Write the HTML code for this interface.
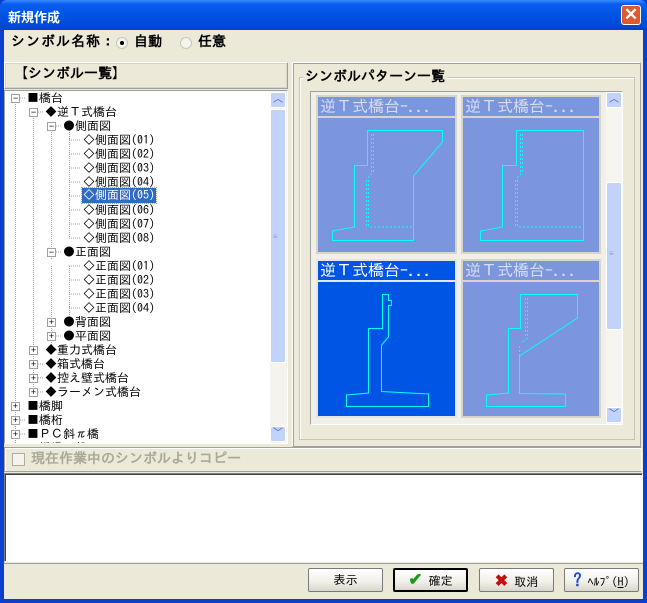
<!DOCTYPE html>
<html><head><meta charset="utf-8"><style>
*{margin:0;padding:0;box-sizing:border-box}
body{width:647px;height:603px;overflow:hidden;background:#0a3fd0;font-family:"Liberation Sans","Noto Sans CJK JP",sans-serif;font-size:12px;position:relative}
.a{position:absolute}
#title{left:0;top:0;width:647px;height:30px;background:linear-gradient(#3a8cff 0,#0a5cf0 4px,#0054e3 15px,#0048d8 26px,#0040c8 30px);border-radius:7px 7px 0 0}
#client{left:4px;top:30px;width:639px;height:569px;background:#ece9d8}
.tree div{position:absolute;height:14px;line-height:14px;white-space:nowrap;font-size:12px;color:#000;font-family:"IPAGothic","Noto Sans CJK JP",monospace}
.bx{position:absolute;width:9px;height:9px;border:1px solid #a0a0a0;background:#fff;font-size:9px;line-height:7px;text-align:center;color:#000}
.btn{position:absolute;top:568px;height:24px;width:75px;border:1px solid #7a7a7a;border-radius:2px;background:linear-gradient(#fff,#f0efe8 60%,#d8d6cc);text-align:center;line-height:22px;font-size:12px;font-family:"IPAGothic","Noto Sans CJK JP",sans-serif}
.cap{position:absolute;height:21px;color:#d8dcf0;font-size:16px;line-height:20px;padding-left:2px;white-space:nowrap;overflow:hidden;font-family:"IPAGothic","Noto Sans CJK JP",monospace}
.g{font-family:"IPAGothic","Noto Sans CJK JP",sans-serif}
</style></head><body>
<div id="title" class="a"></div>
<div class="a" style="left:8px;top:7px;color:#fff;font-weight:bold;font-size:13px">新規作成</div>
<div class="a" style="left:621px;top:5px;width:20px;height:20px;border:1px solid #fff;border-radius:3px;background:#e0582e;color:#fff;font-size:17px;line-height:17px;text-align:center;font-weight:bold">✕</div>
<div id="client" class="a"></div>
<div class="a g" style="left:11px;top:34px;font-size:14px;font-weight:bold;letter-spacing:1px">シンボル名称：</div>
<div class="a" style="left:116px;top:37px;width:12px;height:12px;border-radius:50%;background:#f4f3ee;border:1px solid #c8c6bc"><div class="a" style="left:3px;top:3px;width:4px;height:4px;border-radius:50%;background:#000"></div></div>
<div class="a g" style="left:134px;top:34px;font-size:14px;font-weight:bold">自動</div>
<div class="a" style="left:180px;top:37px;width:12px;height:12px;border-radius:50%;background:#f4f3ee;border:1px solid #c8c6bc"></div>
<div class="a g" style="left:198px;top:34px;font-size:14px;font-weight:bold">任意</div>
<div class="a" style="left:4px;top:62px;width:284px;height:27px;border:1px solid;border-color:#fff #a0a0a0 #a0a0a0 #fff;box-shadow:inset 0 0 0 1px #d8d4c4"></div>
<div class="a g" style="left:14px;top:66px;font-size:14px;font-weight:bold">【シンボル一覧】</div>
<div class="a" style="left:4px;top:90px;width:284px;height:354px;background:#fff;border:1px solid;border-color:#a0a0a0 #fff #fff #a0a0a0"></div>
<div class="a" style="left:270px;top:91px;width:17px;height:352px;background:#f4f3ee"></div>
<div class="a" style="left:270px;top:92px;width:16px;height:16px;background:#c1d3fb;border:1px solid #fff;border-radius:2px;color:#4d6185;font-size:10px;text-align:center;line-height:14px">︿</div>
<div class="a" style="left:270px;top:109px;width:16px;height:254px;background:#c1d3fb;border:1px solid #fff;border-radius:2px"></div>
<div class="a" style="left:273px;top:233px;width:9px;font-size:8px;color:#8aa0cc;line-height:8px">≡</div>
<div class="a" style="left:270px;top:426px;width:16px;height:16px;background:#c1d3fb;border:1px solid #fff;border-radius:2px;color:#4d6185;font-size:10px;text-align:center;line-height:14px">﹀</div>
<div class="a tree" style="left:5px;top:91px;width:265px;height:352px;overflow:hidden">
<svg class="a" style="left:0;top:0" width="265" height="352"><g stroke="#a0a0a0" stroke-dasharray="1,1" fill="none">
<path d="M10.5 7V352M28.5 21V301M46.5 35V169M64.5 35V147M46.5 175V259M64.5 175V231"/>
<path d="M15 7h6M33 21h6M51 35h6M64 49h12M64 63h12M64 77h12M64 91h12M64 105h12M64 119h12M64 133h12M64 147h12M51 161h6M64 175h12M64 189h12M64 203h12M64 217h12M64 231h12M51 245h6M51 259h6M33 273h6M33 287h6M33 301h6M33 315h6M15 329h6M15 343h6"/>
</g></svg>
</div>
<div class="a tree" style="left:5px;top:91px;width:265px;height:352px;overflow:hidden">
<span class="bx" style="left:6px;top:3px">−</span><div style="left:22px;top:0">■橋台</div>
<span class="bx" style="left:24px;top:17px">−</span><div style="left:40px;top:14px">◆逆Ｔ式橋台</div>
<span class="bx" style="left:42px;top:31px">−</span><div style="left:58px;top:28px">●側面図</div>
<div style="left:78px;top:42px">◇側面図(01)</div>
<div style="left:78px;top:56px">◇側面図(02)</div>
<div style="left:78px;top:70px">◇側面図(03)</div>
<div style="left:78px;top:84px">◇側面図(04)</div>
<div style="left:77px;top:97px;background:#316ac5;color:#fff;outline:1px dotted #e0a040;padding:0 1px;height:15px">◇側面図(05)</div>
<div style="left:78px;top:112px">◇側面図(06)</div>
<div style="left:78px;top:126px">◇側面図(07)</div>
<div style="left:78px;top:140px">◇側面図(08)</div>
<span class="bx" style="left:42px;top:157px">−</span><div style="left:58px;top:154px">●正面図</div>
<div style="left:78px;top:168px">◇正面図(01)</div>
<div style="left:78px;top:182px">◇正面図(02)</div>
<div style="left:78px;top:196px">◇正面図(03)</div>
<div style="left:78px;top:210px">◇正面図(04)</div>
<span class="bx" style="left:42px;top:227px">+</span><div style="left:58px;top:224px">●背面図</div>
<span class="bx" style="left:42px;top:241px">+</span><div style="left:58px;top:238px">●平面図</div>
<span class="bx" style="left:24px;top:255px">+</span><div style="left:40px;top:252px">◆重力式橋台</div>
<span class="bx" style="left:24px;top:269px">+</span><div style="left:40px;top:266px">◆箱式橋台</div>
<span class="bx" style="left:24px;top:283px">+</span><div style="left:40px;top:280px">◆控え壁式橋台</div>
<span class="bx" style="left:24px;top:297px">+</span><div style="left:40px;top:294px">◆ラーメン式橋台</div>
<span class="bx" style="left:6px;top:311px">+</span><div style="left:22px;top:308px">■橋脚</div>
<span class="bx" style="left:6px;top:325px">+</span><div style="left:22px;top:322px">■橋桁</div>
<span class="bx" style="left:6px;top:339px">+</span><div style="left:22px;top:336px">■ＰＣ斜π橋</div>
<div style="left:22px;top:350px">■橋梁一般</div>
</div>
<div class="a" style="left:292px;top:62px;width:349px;height:385px;border:1px solid;border-color:#fff #a0a0a0 #a0a0a0 #fff;box-shadow:inset 1px 1px 0 #a0a0a0"></div>
<div class="a" style="left:299px;top:77px;width:336px;height:363px;border:1px solid #c8c4b4;box-shadow:1px 1px 0 #fff inset"></div>
<div class="a g" style="left:303px;top:69px;background:#ece9d8;padding:0 2px;font-size:14px;font-weight:bold">シンボルパターン一覧</div>
<div class="a" style="left:310px;top:91px;width:313px;height:334px;background:#f0efe8;border:1px solid;border-color:#a0a0a0 #fff #fff #a0a0a0"></div>
<div class="a" style="left:316px;top:95px;width:141px;height:159px;background:#7b96dc;border:2px solid #d8d4c8"></div>
<div class="a" style="left:461px;top:95px;width:140px;height:159px;background:#7b96dc;border:2px solid #d8d4c8"></div>
<div class="a" style="left:316px;top:259px;width:141px;height:159px;background:#0055e5;border:2px solid #e8e6dc"></div>
<div class="a" style="left:461px;top:259px;width:140px;height:159px;background:#7b96dc;border:2px solid #d8d4c8"></div>
<div class="a" style="left:318px;top:116px;width:137px;height:2px;background:#d8d4c8"></div>
<div class="a" style="left:463px;top:116px;width:136px;height:2px;background:#d8d4c8"></div>
<div class="a" style="left:318px;top:280px;width:137px;height:2px;background:#e8e6dc"></div>
<div class="a" style="left:463px;top:280px;width:136px;height:2px;background:#d8d4c8"></div>
<div class="cap" style="left:318px;top:96px;width:137px">逆Ｔ式橋台-...</div>
<div class="cap" style="left:463px;top:96px;width:136px">逆Ｔ式橋台-...</div>
<div class="cap" style="left:318px;top:260px;width:137px;color:#fff">逆Ｔ式橋台-...</div>
<div class="cap" style="left:463px;top:260px;width:136px">逆Ｔ式橋台-...</div>
<svg class="a" style="left:0;top:0" width="647" height="603"><g fill="none" stroke="#00ffff" stroke-width="1">
<path d="M367.5 130.5H424L442.5 130.5V142L413.5 176V240.5H332.5V231L354.5 227V165.5H367.5Z"/>
<path d="M373.5 134V172L368 178M371.5 134V172M366.5 180V228M368.5 180V228M370 227H413" stroke-dasharray="2,2"/>
<path d="M516.5 130.5H583.5V240.5H480.5V231L502.5 227V165.5H516.5Z"/>
<path d="M522.5 134V172L517 178M520.5 134V172M515.5 180V228M517.5 180V228M519 227H583" stroke-dasharray="2,2"/>
<path d="M382.5 294.5H388.5V300.5H391.5V305.5H388.5V337L381.5 345V391.5L428.5 394V406.5H346.5V395L368.5 393V328.5H382.5Z"/>
<path d="M520.5 294.5H577.5V318L519.5 356V393.5L565.5 394V406.5H486.5V395L508.5 393V328.5H520.5Z"/>
<path d="M527.5 298V338L521 343M525.5 298V338M519.5 346V356" stroke-dasharray="2,2"/>
</g></svg>
<div class="a" style="left:606px;top:92px;width:16px;height:332px;background:#f6f5f0"></div>
<div class="a" style="left:606px;top:92px;width:16px;height:16px;background:#c1d3fb;border:1px solid #fff;border-radius:2px;color:#4d6185;font-size:10px;text-align:center;line-height:14px">︿</div>
<div class="a" style="left:606px;top:182px;width:16px;height:148px;background:#c1d3fb;border:1px solid #fff;border-radius:2px"></div>
<div class="a" style="left:609px;top:250px;font-size:8px;color:#8aa0cc;line-height:8px">≡</div>
<div class="a" style="left:606px;top:407px;width:16px;height:16px;background:#c1d3fb;border:1px solid #fff;border-radius:2px;color:#4d6185;font-size:10px;text-align:center;line-height:14px">﹀</div>
<div class="a" style="left:4px;top:447px;width:638px;height:25px;border:1px solid;border-color:#a0a0a0 #fff #a0a0a0 #a0a0a0;box-shadow:inset 1px 1px 0 #fff"></div>
<div class="a" style="left:12px;top:453px;width:13px;height:13px;border:1px solid #b0aca0;background:#f4f3ee"></div>
<div class="a g" style="left:31px;top:451px;font-size:14px;font-weight:bold;color:#aca899">現在作業中のシンボルよりコピー</div>
<div class="a" style="left:4px;top:473px;width:639px;height:89px;background:#fff;border:1px solid;border-color:#808080 #fff #fff #808080;box-shadow:inset 1px 1px 0 #404040"></div>
<div class="a" style="left:4px;top:563px;width:639px;height:1px;background:#a0a0a0"></div>
<div class="btn" style="left:308px">表示</div>
<div class="btn" style="left:393px;border:2px solid #000;line-height:20px"><span style="color:#1a9a1a;font-size:17px;font-weight:bold">✔</span> 確定</div>
<div class="btn" style="left:479px"><span style="color:#c01010;font-size:16px;font-weight:bold">✖</span> 取消</div>
<div class="btn" style="left:564px"><span style="color:#1a4ad0;font-size:16px;font-weight:bold">?</span> ﾍﾙﾌﾟ(<u>H</u>)</div>
</body></html>
